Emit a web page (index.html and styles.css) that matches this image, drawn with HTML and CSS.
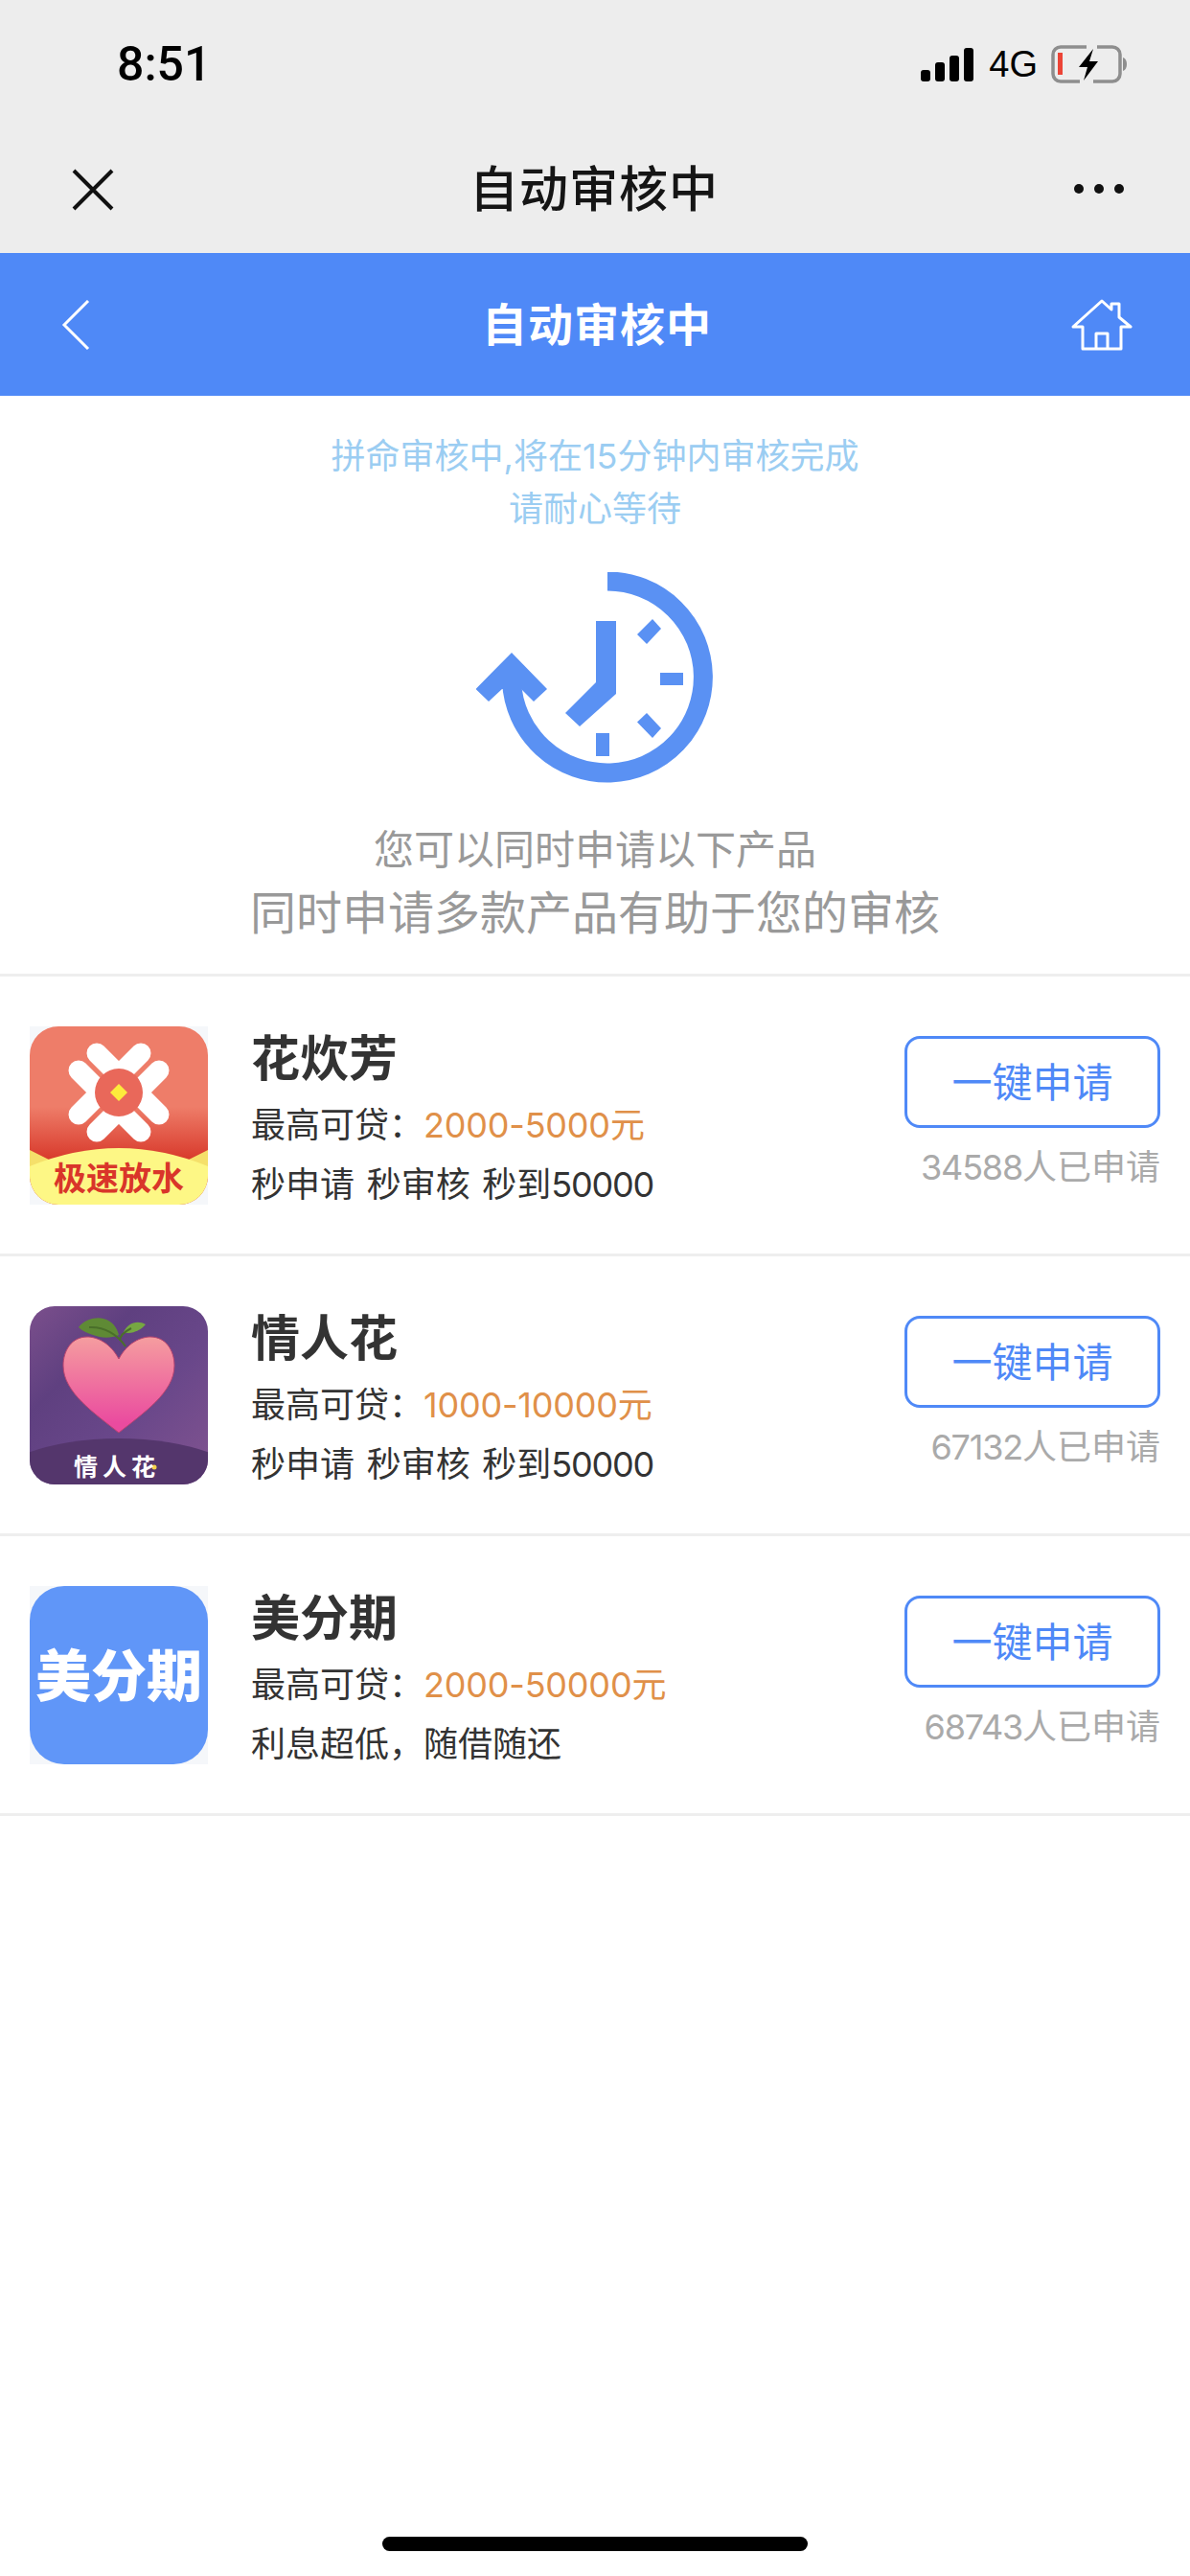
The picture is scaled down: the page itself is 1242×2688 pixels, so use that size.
FILE: index.html
```html
<!DOCTYPE html>
<html lang="zh-CN">
<head>
    <meta charset="UTF-8">
    <meta name="viewport" content="width=device-width, initial-scale=1.0">
    <title>自动审核中</title>
    <link rel="stylesheet" href="styles.css">
</head>
<body>
    <div class="top-chrome">
        <div class="status-bar">
            <span class="time">8:51</span>
            <div class="status-icons">
                <svg class="signal" viewBox="0 0 55 35" width="55" height="35">
                    <rect x="0" y="23" width="10" height="12" rx="3"/>
                    <rect x="15" y="15" width="10" height="20" rx="3"/>
                    <rect x="30" y="8" width="10" height="27" rx="3"/>
                    <rect x="45" y="0" width="10" height="35" rx="3"/>
                </svg>
                <span class="network">4G</span>
                <svg class="battery" viewBox="0 0 80 40" width="80" height="40">
                    <path d="M37 2H10a8 8 0 0 0-8 8v20a8 8 0 0 0 8 8h20M44 38h20a8 8 0 0 0 8-8V10a8 8 0 0 0-8-8H48" fill="none" stroke="#8e8e8e" stroke-width="3.5"/>
                    <path d="M75 13c3 1 4 4 4 7s-1 6-4 7z" fill="#8e8e8e"/>
                    <rect x="7" y="8" width="5" height="23" fill="#ec4436"/>
                    <path d="M44 4L29 23h9l-4 14 15-20h-9z" fill="#000"/>
                </svg>
            </div>
        </div>
        <div class="wechat-bar">
            <svg class="close-icon" viewBox="0 0 44 44" width="44" height="44">
                <path d="M2 2l40 40M42 2L2 42" stroke="#111" stroke-width="4" fill="none"/>
            </svg>
            <h1 class="wechat-title">自动审核中</h1>
            <div class="more-dots"><i></i><i></i><i></i></div>
        </div>
    </div>

    <header class="app-header">
        <svg class="back-icon" viewBox="0 0 30 52" width="30" height="52">
            <path d="M28 1L3 26l25 25" stroke="#fff" stroke-width="3" fill="none"/>
        </svg>
        <h2 class="app-title">自动审核中</h2>
        <svg class="home-icon" viewBox="0 0 64 54" width="64" height="54">
            <path d="M12 52V29H2L32 2l10 9V5h8v14l12 10H52v23zM26 52V36h12v16" stroke="#fff" stroke-width="3" fill="none" stroke-linejoin="round"/>
        </svg>
    </header>

    <section class="status-panel">
        <p class="notice">拼命审核中,将在15分钟内审核完成<br>请耐心等待</p>
        <svg class="clock" viewBox="498 596 248 220" width="248" height="220">
            <path d="M635 605.500a100 100 0 1 1-100 105" fill="none" stroke="#5a91f3" stroke-width="20"/>
            <g fill="#5a91f3">
                <path d="M535 680l37 38-14 13-13-13h-20l-14 13-13.500-13z"/>
                <path d="M623 647h21v76l-38 34-15-14 32-32z"/>
                <path d="M666 661l10 10 15-16-9-10z"/>
                <rect x="690" y="701" width="24" height="13"/>
                <path d="M666 752.500l10-9.500 15 16-9 10z"/>
                <rect x="623" y="764" width="14" height="24"/>
            </g>
        </svg>
        <p class="tip">您可以同时申请以下产品</p>
        <p class="tip-large">同时申请多款产品有助于您的审核</p>
    </section>

    <ul class="product-list">
        <li class="product">
            <svg class="product-logo" viewBox="0 0 186 186" width="186" height="186">
                <defs>
                    <linearGradient id="redFade" x1="0" y1="0" x2="0" y2="1">
                        <stop offset="0.45" stop-color="#ee7d69"/>
                        <stop offset="0.75" stop-color="#d8392b"/>
                    </linearGradient>
                    <clipPath id="roundRed"><rect width="186" height="186" rx="30"/></clipPath>
                </defs>
                <rect width="186" height="186" fill="#f5f7fa"/>
                <g clip-path="url(#roundRed)">
                    <rect width="186" height="186" fill="url(#redFade)"/>
                    <g fill="none" stroke="#fff" stroke-width="21" stroke-linecap="round" stroke-linejoin="round">
                        <path d="M70 28l23 23 23-23"/>
                        <path d="M70 110l23-23 23 23"/>
                        <path d="M51 46l23 23-23 23"/>
                        <path d="M135 46l-23 23 23 23"/>
                    </g>
                    <circle cx="93" cy="69" r="25" fill="#e9685a"/>
                    <path d="M93 60l9 9-9 9-9-9z" fill="#fdeb3c"/>
                    <path d="M0 129l20 10h146l20-10v30H0z" fill="#f5e06a"/>
                    <path d="M0 146Q93 108 186 146V186H0z" fill="#fdf785"/>
                </g>
                <text class="logo-text logo-text-red" x="93" y="171" text-anchor="middle">极速放水</text>
            </svg>
            <div class="product-info">
                <h3 class="product-name">花炊芳</h3>
                <p class="product-line">最高可贷：<span class="amount">2000-5000元</span></p>
                <p class="product-line perks">秒申请 秒审核 秒到<span class="digits">50000</span></p>
            </div>
            <div class="product-action">
                <button class="apply-btn">一键申请</button>
                <span class="apply-count"><span class="digits">34588</span>人已申请</span>
            </div>
        </li>
        <li class="product">
            <svg class="product-logo" viewBox="0 0 186 186" width="186" height="186">
                <defs>
                    <linearGradient id="purpleBg" x1="0" y1="0" x2="1" y2="1">
                        <stop offset="0" stop-color="#7b4f8c"/>
                        <stop offset="0.3" stop-color="#5f4080"/>
                        <stop offset="0.6" stop-color="#69478a"/>
                        <stop offset="1" stop-color="#825490"/>
                    </linearGradient>
                    <linearGradient id="heartFade" x1="0" y1="0" x2="0" y2="1">
                        <stop offset="0" stop-color="#f59d9f"/>
                        <stop offset="0.9" stop-color="#ea4b9f"/>
                    </linearGradient>
                    <clipPath id="roundLogo"><rect width="186" height="186" rx="26"/></clipPath>
                </defs>
                <g clip-path="url(#roundLogo)">
                    <rect width="186" height="186" fill="url(#purpleBg)"/>
                    <ellipse cx="93" cy="190" rx="135" ry="52" fill="#54366c"/>
                    <path d="M93 55C84 38 70 32 60 32C44 32 35 46 35 62C35 90 68 112 93 132C118 112 151 90 151 62C151 46 142 32 126 32C116 32 102 38 93 55z" fill="url(#heartFade)" stroke="#b9436f" stroke-width="1"/>
                    <path d="M51 22C58 13 70 11 77 13C86 15 91 22 93 30C84 34 74 33 66 30C60 28 55 26 51 22z" fill="#5f8a35"/>
                    <path d="M98 27C102 18 112 14 121 19C116 25 106 30 98 27z" fill="#76a742"/>
                    <path d="M62 22C78 21 92 30 100 42M94 36C94 32 96 28 106 23" fill="none" stroke="#4a6f2a" stroke-width="2"/>
                    <circle cx="130" cy="168" r="2.500" fill="#f6d24a"/>
                </g>
                <text class="logo-text logo-text-white" x="91" y="177" text-anchor="middle">情人花</text>
            </svg>
            <div class="product-info">
                <h3 class="product-name">情人花</h3>
                <p class="product-line">最高可贷：<span class="amount">1000-10000元</span></p>
                <p class="product-line perks">秒申请 秒审核 秒到<span class="digits">50000</span></p>
            </div>
            <div class="product-action">
                <button class="apply-btn">一键申请</button>
                <span class="apply-count"><span class="digits">67132</span>人已申请</span>
            </div>
        </li>
        <li class="product">
            <div class="product-logo logo-blue"><div class="logo-blue-inner">美分期</div></div>
            <div class="product-info">
                <h3 class="product-name">美分期</h3>
                <p class="product-line">最高可贷：<span class="amount">2000-50000元</span></p>
                <p class="product-line">利息超低，随借随还</p>
            </div>
            <div class="product-action">
                <button class="apply-btn">一键申请</button>
                <span class="apply-count"><span class="digits">68743</span>人已申请</span>
            </div>
        </li>
    </ul>

    <div class="home-indicator"></div>
</body>
</html>
```

FILE: styles.css
```css
* {
    box-sizing: border-box;
}
body {
    font-family: Inter, "Noto Sans CJK SC", sans-serif;
    background-color: #ffffff;
    display: flex;
    flex-direction: column;
    width: 1242px;
    height: 2688px;
    margin: 0;
    overflow: hidden;
}
h1, h2, h3, p, ul {
    margin: 0;
    padding: 0;
}

/* top grey area */
.top-chrome {
    background-color: #ededed;
    height: 264px;
}
.status-bar {
    display: flex;
    justify-content: space-between;
    align-items: center;
    height: 134px;
    padding: 0 65px 0 122px;
}
.time {
    font-family: Roboto, sans-serif;
    font-size: 50px;
    font-weight: 500;
    color: #000;
}
.status-icons {
    display: flex;
    align-items: center;
}
.signal {
    fill: #000;
}
.network {
    font-family: "Liberation Sans", sans-serif;
    font-size: 38px;
    color: #000;
    margin: 0 14px 0 16px;
}
.wechat-bar {
    display: grid;
    grid-template-columns: 1fr auto 1fr;
    align-items: center;
    height: 126px;
    padding: 0 69px 0 75px;
}
.wechat-title {
    font-size: 51px;
    font-weight: 500;
    color: #151515;
    letter-spacing: 1px;
    margin: 0 8px 6px 0;
}
.close-icon {
    margin-top: 1px;
}
.more-dots {
    display: flex;
    justify-self: end;
    gap: 11px;
}
.more-dots i {
    width: 10px;
    height: 10px;
    border-radius: 50%;
    background-color: #111;
}

/* blue header */
.app-header {
    background-color: #4f89f7;
    height: 149px;
    display: grid;
    grid-template-columns: 1fr auto 1fr;
    align-items: center;
    padding: 0 60px 0 64px;
}
.home-icon {
    justify-self: end;
}
.app-title {
    font-size: 47px;
    font-weight: 700;
    color: #fff;
    letter-spacing: 1px;
    margin-bottom: 7px;
}

/* review status */
.status-panel {
    display: flex;
    flex-direction: column;
    align-items: center;
    padding-top: 36px;
    height: 606px;
    border-bottom: 3px solid #eeeeee;
}
.notice {
    font-size: 36px;
    line-height: 55px;
    color: #9bcdf2;
    text-align: center;
}
.clock {
    margin-top: 38px;
}
.tip {
    font-size: 42px;
    line-height: 56px;
    color: #999;
    margin-top: 42px;
}
.tip-large {
    font-size: 48px;
    line-height: 68px;
    color: #999;
    margin-top: 4px;
}

/* product rows */
.product-list {
    list-style: none;
}
.product {
    display: flex;
    height: 292px;
    padding: 52px 31px 0;
    border-bottom: 3px solid #eeeeee;
}
.product-logo {
    flex: none;
    width: 186px;
    height: 186px;
}
.logo-text {
    font-family: "Noto Sans CJK SC", sans-serif;
    font-weight: 700;
}
.logo-text-red {
    font-size: 34px;
    fill: #d9352a;
}
.logo-text-white {
    font-size: 25px;
    letter-spacing: 5px;
    fill: #fff;
}
.logo-blue {
    background-color: #f5f7fa;
}
.logo-blue-inner {
    height: 100%;
    padding-bottom: 6px;
    background-color: #6096f8;
    border-radius: 36px;
    display: flex;
    align-items: center;
    justify-content: center;
    font-size: 58px;
    font-weight: 900;
    color: #fff;
    white-space: nowrap;
}
.product-info {
    margin-left: 45px;
}
.product-name {
    font-size: 51px;
    line-height: 64px;
    font-weight: 700;
    color: #333;
    margin: 2px 0 6px;
}
.product-line {
    font-size: 36px;
    line-height: 62px;
    color: #333;
}
.perks {
    word-spacing: 2.5px;
}
.digits {
    letter-spacing: -1.2px;
}
.amount {
    color: #e09049;
    letter-spacing: -0.2px;
}
.product-action {
    margin-left: auto;
    display: flex;
    flex-direction: column;
    align-items: flex-end;
}
.apply-btn {
    width: 267px;
    height: 96px;
    margin: 10px 0 0 0;
    padding: 0 0 5px;
    background-color: #fff;
    border: 3px solid #4f89f7;
    border-radius: 16px;
    color: #4f89f7;
    font-family: inherit;
    font-size: 42px;
}
.apply-count {
    font-size: 36px;
    line-height: 60px;
    margin-top: 11px;
    color: #aaa;
}

.home-indicator {
    width: 444px;
    height: 15px;
    margin: auto auto 26px;
    background-color: #000;
    border-radius: 8px;
}
```
